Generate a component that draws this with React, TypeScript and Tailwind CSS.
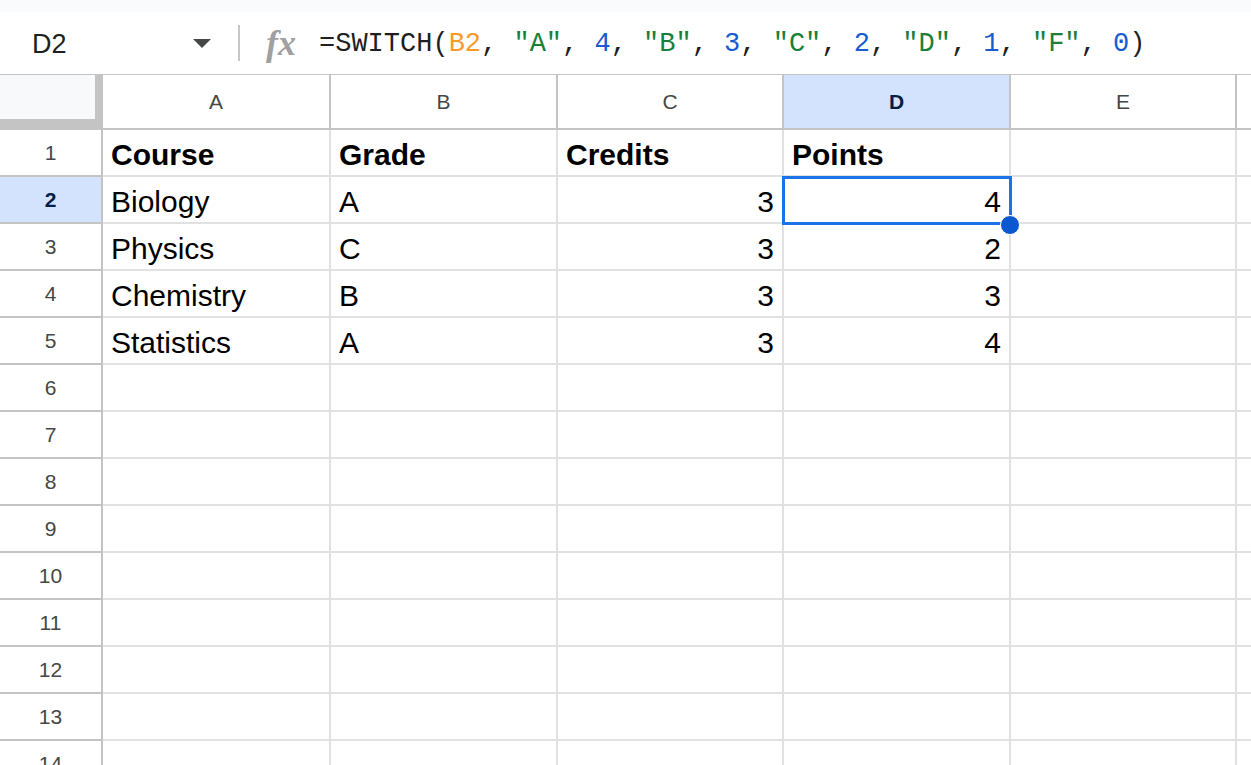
import React from 'react';

const colWidths = ['w-[228px]', 'w-[227px]', 'w-[226px]', 'w-[227px]', 'w-[226px]'];
const colLetters = ['A', 'B', 'C', 'D', 'E'];

type Cell = { text: string; bold?: boolean; right?: boolean };

const data: Cell[][] = [
	[{ text: 'Course', bold: true }, { text: 'Grade', bold: true }, { text: 'Credits', bold: true }, { text: 'Points', bold: true }],
	[{ text: 'Biology' }, { text: 'A' }, { text: '3', right: true }, { text: '4', right: true }],
	[{ text: 'Physics' }, { text: 'C' }, { text: '3', right: true }, { text: '2', right: true }],
	[{ text: 'Chemistry' }, { text: 'B' }, { text: '3', right: true }, { text: '3', right: true }],
	[{ text: 'Statistics' }, { text: 'A' }, { text: '3', right: true }, { text: '4', right: true }],
];

const FormulaBar = () => (
	<div className="flex h-[63px] items-center border-b border-[#c4c4c4] bg-white pt-[3px]">
		<div className="w-[180px] pl-[32px] text-[27px] text-[#1f1f1f]">D2</div>
		{/* dropdown caret */}
		<svg width="18" height="9" viewBox="0 0 18 9" className="ml-[13px] -mt-[3px]">
			<path d="M0 0 L18 0 L9 9 Z" fill="#444746" />
		</svg>
		<div className="ml-[27px] -mt-[3px] h-[36px] w-[2px] bg-[#c7c7c7]" />
		<div className="ml-[26px] -mt-[3px] w-[36px] font-['Liberation_Serif'] text-[36px] font-bold italic leading-none text-[#a0a0a0]">
			fx
		</div>
		<div className="ml-[17px] whitespace-pre font-['Liberation_Mono'] text-[27px] text-[#1f1f1f]">
			=SWITCH(<span className="text-[#f59b2b]">B2</span>, <span className="text-[#188038]">"A"</span>,{' '}
			<span className="text-[#1a5bd0]">4</span>, <span className="text-[#188038]">"B"</span>,{' '}
			<span className="text-[#1a5bd0]">3</span>, <span className="text-[#188038]">"C"</span>,{' '}
			<span className="text-[#1a5bd0]">2</span>, <span className="text-[#188038]">"D"</span>,{' '}
			<span className="text-[#1a5bd0]">1</span>, <span className="text-[#188038]">"F"</span>,{' '}
			<span className="text-[#1a5bd0]">0</span>)
		</div>
	</div>
);

const HeaderRow = () => (
	<div className="flex h-[55px] border-b-2 border-[#c4c4c4]">
		{/* corner with freeze handles */}
		<div className="flex w-[103px] shrink-0 flex-col bg-[#c4c4c4]">
			<div className="h-[44px] w-[95px] bg-[#f8f9fa]" />
		</div>
		{colLetters.map((l, i) => (
			<div
				key={l}
				className={`${colWidths[i]} flex shrink-0 items-center justify-center border-r-2 border-[#c4c4c4] text-[21px] ${
					l === 'D' ? 'bg-[#d3e3fd] font-bold text-[#041e49]' : 'text-[#444746]'
				}`}
			>
				{l}
			</div>
		))}
		<div className="flex-1" />
	</div>
);

const Row = ({ n }: { n: number }) => {
	const cells = data[n - 1] || [];
	const selected = n === 2;
	return (
		<div className="flex h-[47px] shrink-0">
			<div
				className={`flex w-[103px] shrink-0 items-center justify-center border-r-2 border-b-2 border-[#c4c4c4] text-[21px] ${
					selected ? 'bg-[#d3e3fd] font-bold text-[#041e49]' : 'text-[#444746]'
				}`}
			>
				{n}
			</div>
			{colWidths.map((w, i) => {
				const c = cells[i];
				return (
					<div
						key={i}
						className={`${w} flex shrink-0 items-center border-r-2 border-b-2 border-[#e1e1e1] px-[8px] pt-[4px] text-[30px] text-black ${
							c?.right ? 'justify-end' : ''
						} ${c?.bold ? 'font-bold' : ''}`}
					>
						{c?.text}
					</div>
				);
			})}
			<div className="flex-1 border-b-2 border-[#e1e1e1]" />
		</div>
	);
};

export default function App() {
	const rows = Array.from({ length: 14 }, (_, i) => i + 1);
	return (
		<div className="relative h-[765px] w-[1251px] overflow-hidden bg-white font-['Liberation_Sans',Arial,sans-serif]">
			<div className="h-[12px] bg-[#f9fbfd]" />
			<FormulaBar />
			<HeaderRow />
			{rows.map((n) => (
				<Row key={n} n={n} />
			))}

			{/* active cell selection D2 */}
			<div className="absolute left-[782px] top-[176px] h-[49px] w-[230px] border-[3px] border-[#1a73e8]" />
			<div className="absolute left-[1000px] top-[215px] h-[20px] w-[20px] rounded-full border border-white bg-[#0b57d0]" />
		</div>
	);
}
